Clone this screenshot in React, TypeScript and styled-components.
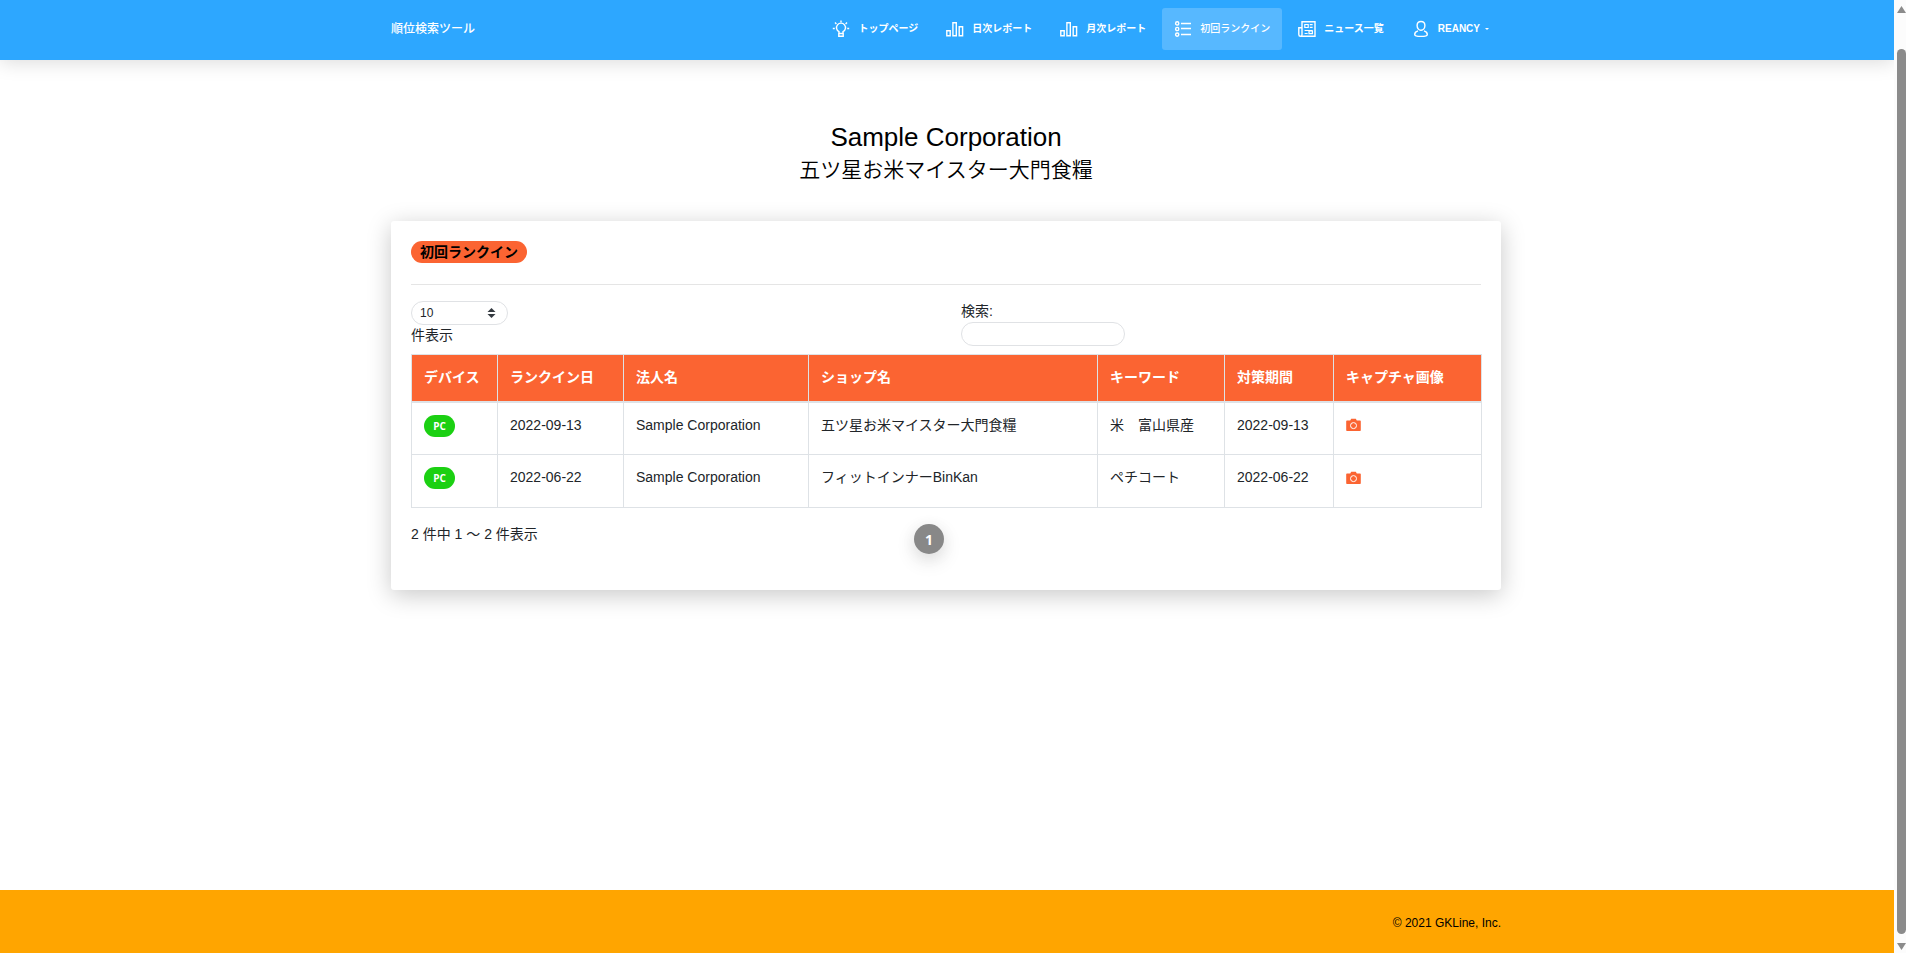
import React from "react";
import styled, { createGlobalStyle } from "styled-components";

const GlobalStyle = createGlobalStyle`
  *, *::before, *::after { box-sizing: border-box; }
  body {
    margin: 0;
    background: #fff;
    color: #212529;
    font-family: "Liberation Sans", "Noto Sans CJK JP", sans-serif;
    font-size: 14px;
    line-height: 21px;
  }
`;

const Shell = styled.div`
  display: flex;
  min-height: 100vh;
`;

const Page = styled.div`
  flex: 1;
  min-width: 0;
  display: flex;
  flex-direction: column;
  overflow: hidden;
`;

const Container = styled.div`
  width: 100%;
  max-width: 1142px;
  margin: 0 auto;
  padding: 0 17px 0 15px;
`;

const Header = styled.header`
  background: #2da7ff;
  box-shadow: 0 2px 20px rgba(0, 0, 0, 0.15);
`;

const HeaderRow = styled(Container)`
  display: flex;
  align-items: flex-start;
  justify-content: space-between;
  height: 60px;
  padding-top: 8px;
`;

const Brand = styled.a`
  color: #fff;
  font-size: 12px;
  line-height: 42px;
  font-weight: 500;
  text-decoration: none;
`;

const Menu = styled.nav`
  display: flex;
  gap: 4px;
`;

const MenuLink = styled.a<{ $active?: boolean }>`
  display: flex;
  align-items: center;
  height: 42px;
  padding: 0 12px;
  border-radius: 3px;
  color: #fff;
  font-size: 10px;
  line-height: 20px;
  font-weight: ${(p) => (p.$active ? 500 : 600)};
  text-decoration: none;
  white-space: nowrap;
  background: ${(p) => (p.$active ? "rgba(255, 255, 255, 0.2)" : "transparent")};
`;

const MenuIcon = styled.svg`
  width: 18px;
  height: 18px;
  margin-right: 8px;
  fill: none;
  stroke: #fff;
  stroke-width: 1.4;
`;

const Caret = styled.span`
  margin-left: 5px;
  border: 2px solid transparent;
  border-top-color: #fff;
  border-bottom: 0;
`;

const Main = styled.main`
  flex: 1;
`;

const Heading = styled.div`
  padding: 60px 0 35px;
  text-align: center;
  color: #000;
`;

const Company = styled.h1`
  margin: 0;
  font-size: 26px;
  line-height: 34px;
  font-weight: 400;
`;

const Shop = styled.h2`
  margin: 0;
  font-size: 21px;
  line-height: 32px;
  font-weight: 350;
`;

const Card = styled.section`
  min-height: 369px;
  padding: 20px 20px 36px;
  border-radius: 3px;
  background: #fff;
  box-shadow: 0 5px 25px rgba(0, 0, 0, 0.22);
`;

const Badge = styled.h3`
  width: max-content;
  margin: 0;
  padding: 0 9px;
  border-radius: 11px;
  background: #fb6432;
  color: #000;
  font-size: 14px;
  line-height: 22px;
  font-weight: 600;
`;

const Rule = styled.hr`
  margin: 21px 0 16px;
  border: 0;
  border-top: 1px solid #e5e5e5;
`;

const Filters = styled.div`
  display: flex;
  align-items: flex-start;
  height: 53px;
`;

const FilterHalf = styled.div<{ $grow: number }>`
  flex: ${(p) => p.$grow} 1 0;
`;

const FieldLabel = styled.label`
  display: flex;
  flex-direction: column;
  align-items: flex-start;
`;

const SelectWrap = styled.span`
  position: relative;
  display: block;
`;

const LengthSelect = styled.select`
  display: block;
  appearance: none;
  width: 97px;
  height: 24px;
  padding: 0 8px;
  border: 1px solid #e0e2e5;
  border-radius: 12px;
  background: #fff;
  color: #212529;
  font-family: inherit;
  font-size: 12px;
`;

const SelectArrows = styled.svg`
  position: absolute;
  right: 12px;
  top: 7px;
  width: 9px;
  height: 10px;
  pointer-events: none;
  fill: #343a40;
`;

const SearchInput = styled.input`
  display: block;
  width: 164px;
  height: 24px;
  padding: 0 10px;
  border: 1px solid #e0e2e5;
  border-radius: 12px;
  background: #fff;
  font: inherit;
`;

const Table = styled.table`
  width: 100%;
  table-layout: fixed;
  border-collapse: collapse;
  th, td {
    padding: 0 12px;
    border: 1px solid #dee2e6;
    text-align: left;
    vertical-align: top;
    white-space: nowrap;
  }
  th {
    height: 47px;
    padding-top: 12px;
    border-bottom-width: 2px;
    background: #fb6432;
    color: #fff;
    font-weight: 600;
  }
  td {
    height: 53px;
    padding-top: 12px;
  }
`;

const Device = styled.span`
  display: block;
  width: 31px;
  height: 22px;
  border-radius: 11px;
  background: #1bd012;
  color: #fff;
  font-family: "Open Sans", sans-serif;
  font-size: 10px;
  line-height: 22px;
  font-weight: 700;
  text-align: center;
`;

const CaptureLink = styled.a`
  display: flex;
  align-items: center;
  width: max-content;
  height: 21px;
`;

const CameraSvg = styled.svg`
  width: 15px;
  height: 14px;
`;

const Bottom = styled.div`
  display: flex;
  align-items: flex-start;
  padding-top: 16px;
`;

const Info = styled.p<{ $basis: number }>`
  flex: 0 0 ${(p) => p.$basis}%;
  margin: 0;
`;

const PageButton = styled.button`
  width: 30px;
  height: 30px;
  padding: 0;
  border: 0;
  border-radius: 50%;
  background: #888;
  color: #fff;
  font-family: "Open Sans", sans-serif;
  font-size: 14px;
  font-weight: 700;
  box-shadow: 0 7px 20px rgba(0, 0, 0, 0.12), 0 3px 16px rgba(0, 0, 0, 0.06);
`;

const Footer = styled.footer`
  padding: 23px 0 19px;
  background: #ffa500;
  color: #000;
  font-size: 12px;
  line-height: 21px;
  text-align: right;
`;

const Rail = styled.div`
  position: sticky;
  top: 0;
  display: flex;
  flex-direction: column;
  align-items: flex-end;
  width: 12px;
  height: 100vh;
  padding: 6px 0 3px;
  background: #fcfcfc;
`;

const RailArrow = styled.svg`
  width: 9px;
  height: 7px;
  fill: #8b8b8b;
`;

const Thumb = styled.div`
  flex: 1;
  width: 9px;
  margin: 36px 0 9px;
  border-radius: 5px;
  background: #8b8b8b;
`;

const BulbIcon = () => (
  <MenuIcon viewBox="0 0 18 18" aria-hidden="true">
    <path d="M7 13.2v-1.5a4.5 4.5 0 1 1 4 0v1.5M6.8 13.5h4.4v2.8H6.8zM9 .6v1.6M.8 8.5h2M15.2 8.5h2M3 2.6l1.4 1.4M15 2.6 13.6 4" />
  </MenuIcon>
);

const ChartIcon = () => (
  <MenuIcon viewBox="0 0 18 18" aria-hidden="true">
    <path d="M.8 10.7h3.4v5H.8zM6.9 2.7h3.4v13H6.9zM13.2 6.7h3.4v9h-3.4z" />
  </MenuIcon>
);

const ListIcon = () => (
  <MenuIcon viewBox="0 0 18 18" aria-hidden="true">
    <circle cx="3.2" cy="3.4" r="1.6" />
    <circle cx="3.2" cy="9" r="1.6" />
    <circle cx="3.2" cy="14.6" r="1.6" />
    <path d="M7 3.5h10M7 8.5h10M7 14.5h10" />
  </MenuIcon>
);

const NewsIcon = () => (
  <MenuIcon viewBox="0 0 18 18" aria-hidden="true">
    <path d="M4 1.7h13v14.6H2.6A1.9 1.9 0 0 1 .8 14.4V7.7H4zM4 7v7.4q0 1.8-1.4 1.9" />
    <path d="M6.8 4.5h3.4v3H6.8zM11 11h3.4v2.6H11zM11.8 4.6h2.8M11.8 7.4h2.8M6.6 10.5h8M6.6 13.5h3" strokeWidth="1.2" />
  </MenuIcon>
);

const UserIcon = () => (
  <MenuIcon viewBox="0 0 18 18" aria-hidden="true">
    <path d="M9 1.5c2.3 0 3.9 1.6 3.9 4S11.3 10.300 9 10.300 5.100 8 5.100 5.500 6.700 1.500 9 1.500zM6 10.800c-2.100.6-3.300 1.700-3.300 3.600 0 1.300 2.500 2 6.300 2s6.300-.7 6.300-2c0-1.900-1.200-3-3.300-3.600" />
  </MenuIcon>
);

const Camera = () => (
  <CameraSvg viewBox="0 0 15 14" aria-hidden="true">
    <path
      d="M1 2.500h3.200L5.200.7h4.600l1 1.800H14a.8.8 0 0 1 .8.800v9a.8.8 0 0 1-.8.800H1a.8.8 0 0 1-.8-.8v-9a.8.8 0 0 1 .8-.8z"
      fill="#fb6432"
    />
    <circle cx="7.500" cy="7.600" r="3" fill="none" stroke="#fff" />
  </CameraSvg>
);

const menu = [
  { label: "トップページ", icon: <BulbIcon /> },
  { label: "日次レポート", icon: <ChartIcon /> },
  { label: "月次レポート", icon: <ChartIcon /> },
  { label: "初回ランクイン", icon: <ListIcon />, active: true },
  { label: "ニュース一覧", icon: <NewsIcon /> },
  { label: "REANCY", icon: <UserIcon />, caret: true },
];

const columns = [
  { title: "デバイス", width: 86 },
  { title: "ランクイン日", width: 126 },
  { title: "法人名", width: 185 },
  { title: "ショップ名", width: 289 },
  { title: "キーワード", width: 127 },
  { title: "対策期間", width: 109 },
  { title: "キャプチャ画像", width: 148 },
];

const rows = [
  { date: "2022-09-13", company: "Sample Corporation", shop: "五ツ星お米マイスター大門食糧", keyword: "米　富山県産" },
  { date: "2022-06-22", company: "Sample Corporation", shop: "フィットインナーBinKan", keyword: "ペチコート" },
];

export default function App() {
  return (
    <>
      <GlobalStyle />
      <Shell lang="ja">
        <Page>
          <Header>
            <HeaderRow>
              <Brand href="#">順位検索ツール</Brand>
              <Menu>
                {menu.map((m) => (
                  <MenuLink key={m.label} href="#" $active={m.active}>
                    {m.icon}
                    {m.label}
                    {m.caret && <Caret />}
                  </MenuLink>
                ))}
              </Menu>
            </HeaderRow>
          </Header>
          <Main>
            <Container>
              <Heading>
                <Company>Sample Corporation</Company>
                <Shop>五ツ星お米マイスター大門食糧</Shop>
              </Heading>
              <Card>
                <Badge>初回ランクイン</Badge>
                <Rule />
                <Filters>
                  <FilterHalf $grow={550}>
                    <FieldLabel>
                      <SelectWrap>
                        <LengthSelect defaultValue="10">
                          <option>10</option>
                          <option>25</option>
                          <option>50</option>
                          <option>100</option>
                        </LengthSelect>
                        <SelectArrows viewBox="0 0 9 10" aria-hidden="true">
                          <path d="M4.500 0 8.500 4H.5zM4.500 10 .5 6h8z" />
                        </SelectArrows>
                      </SelectWrap>
                      件表示
                    </FieldLabel>
                  </FilterHalf>
                  <FilterHalf $grow={520}>
                    <FieldLabel>
                      検索:
                      <SearchInput type="search" />
                    </FieldLabel>
                  </FilterHalf>
                </Filters>
                <Table>
                  <colgroup>
                    {columns.map((c) => (
                      <col key={c.title} width={c.width} />
                    ))}
                  </colgroup>
                  <thead>
                    <tr>
                      {columns.map((c) => (
                        <th key={c.title} scope="col">{c.title}</th>
                      ))}
                    </tr>
                  </thead>
                  <tbody>
                    {rows.map((r) => (
                      <tr key={r.date}>
                        <td><Device>PC</Device></td>
                        <td>{r.date}</td>
                        <td>{r.company}</td>
                        <td>{r.shop}</td>
                        <td>{r.keyword}</td>
                        <td>{r.date}</td>
                        <td>
                          <CaptureLink href="#" aria-label="キャプチャ画像">
                            <Camera />
                          </CaptureLink>
                        </td>
                      </tr>
                    ))}
                  </tbody>
                </Table>
                <Bottom>
                  <Info $basis={47}>2 件中 1 ～ 2 件表示</Info>
                  <PageButton type="button">1</PageButton>
                </Bottom>
              </Card>
            </Container>
          </Main>
          <Footer>
            <Container>© 2021 GKLine, Inc.</Container>
          </Footer>
        </Page>
        <Rail aria-hidden="true">
          <RailArrow viewBox="0 0 9 7"><path d="M4.500 0 9 7H0z" /></RailArrow>
          <Thumb />
          <RailArrow viewBox="0 0 9 7"><path d="M0 0h9L4.500 7z" /></RailArrow>
        </Rail>
      </Shell>
    </>
  );
}
